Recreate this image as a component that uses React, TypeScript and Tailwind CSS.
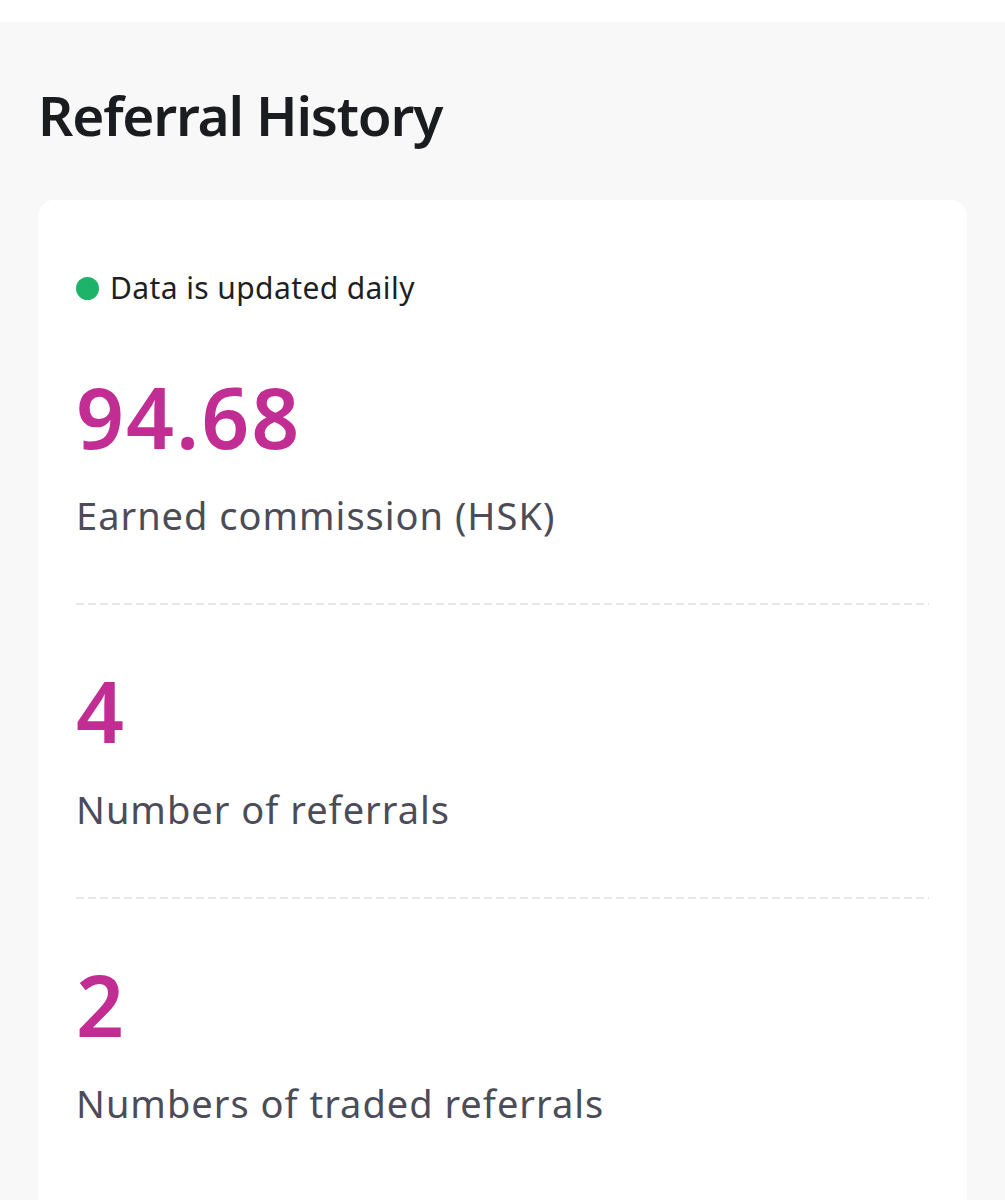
import React from 'react';

interface StatProps {
  value: string;
  label: string;
  divider?: boolean;
}

const Stat: React.FC<StatProps> = ({ value, label, divider }) => (
  <div>
    <div className="text-[84px] leading-[84px] font-semibold tracking-[2px] text-[#c22d94]">{value}</div>
    <div className="mt-[37px] text-[38px] leading-[38px] tracking-[1px] text-[#4b4c58]">{label}</div>
    {divider && (
      <div className="mt-[69px] mb-[64px] h-[2px] bg-[linear-gradient(to_right,#e6e6e8_65%,transparent_0)] bg-[length:12px_2px] bg-repeat-x" />
    )}
  </div>
);

export default function App() {
  return (
    <div className="min-h-[1200px] bg-[#f8f8f8] font-['Noto_Sans',sans-serif]">
      <div className="h-[22px] bg-white" />
      <div className="px-[38px] pt-[65px]">
        <h1 className="text-[55px] leading-[56px] font-semibold text-[#1b1c20] tracking-[-1.2px]">Referral History</h1>
        <div className="mt-[57px] rounded-2xl bg-white px-[38px] pt-[73px] pb-[140px]">
          <div className="flex items-center gap-[11px]">
            <span className="h-[23px] w-[23px] rounded-full bg-[#1db46a]" />
            <span className="text-[30px] leading-[30px] tracking-[0.4px] text-[#1e1f24]">Data is updated daily</span>
          </div>
          <div className="mt-[72px]">
            <Stat value="94.68" label="Earned commission (HSK)" divider />
            <Stat value="4" label="Number of referrals" divider />
            <Stat value="2" label="Numbers of traded referrals" />
          </div>
        </div>
      </div>
    </div>
  );
}
